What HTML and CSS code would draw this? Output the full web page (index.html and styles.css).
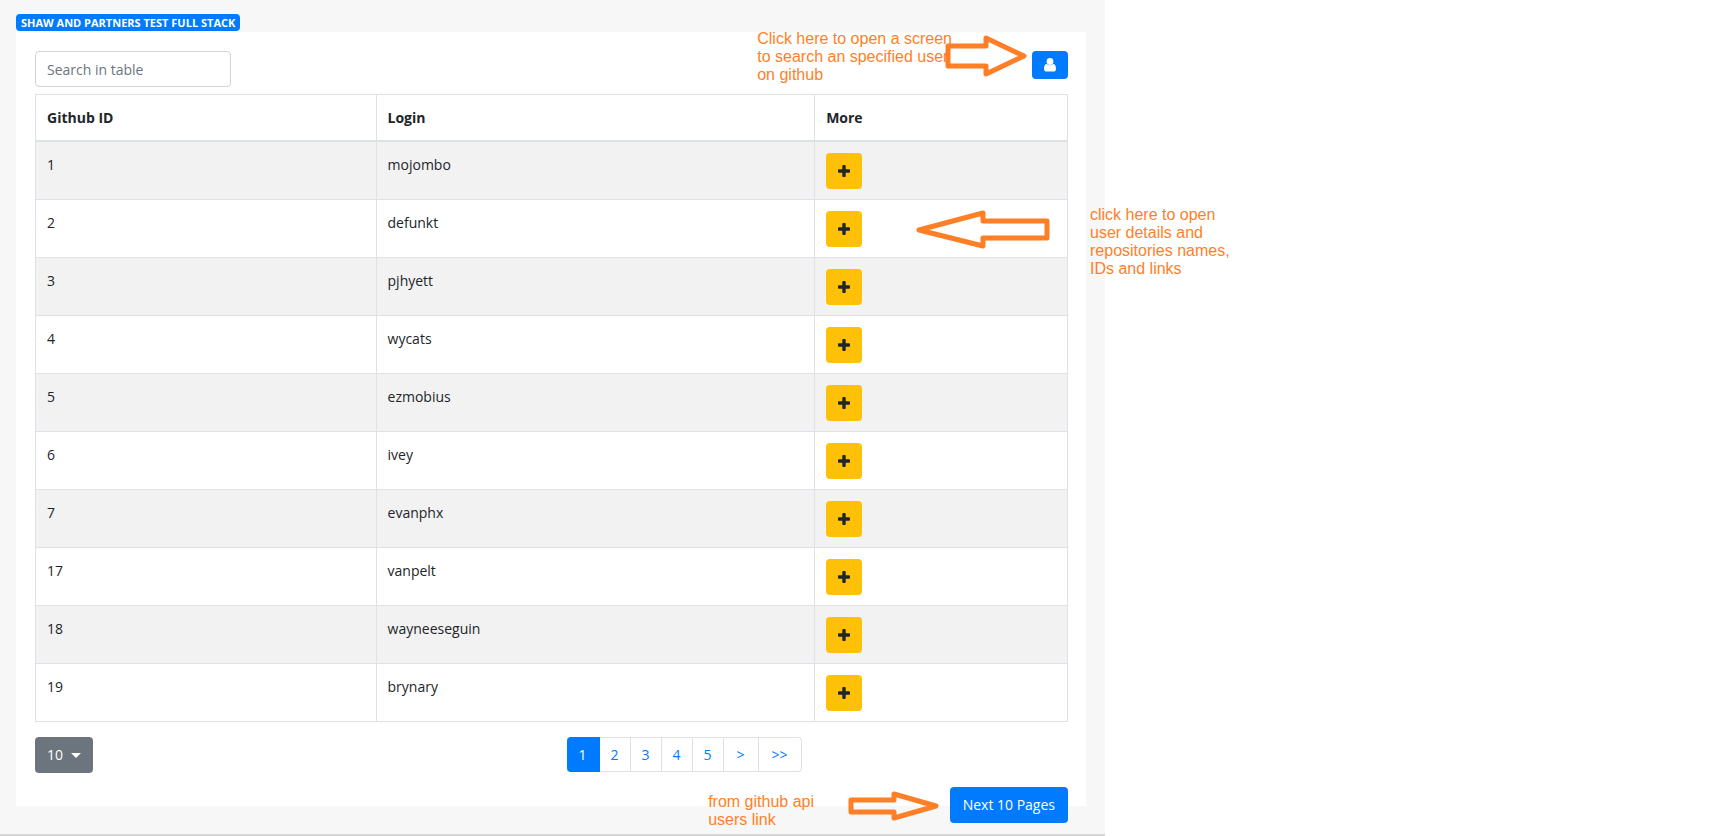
FILE: index.html
```html
<!DOCTYPE html>
<html lang="en">
<head>
<meta charset="utf-8">
<title>Shaw and Partners Test Full Stack</title>
<link rel="stylesheet" href="styles.css">
</head>
<body>
<svg class="sprite" aria-hidden="true">
  <symbol id="plus" viewBox="0 0 12 12"><path d="M5.2 0h1.6q.9 0 .9.9v3.4h3.4q.9 0 .9.9v1.600q0 .9-.9.9H7.700v3.400q0 .9-.9.9H5.200q-.9 0-.9-.9V7.700H.9q-.9 0-.9-.9V5.200q0-.9.9-.9h3.400V.9q0-.9.9-.9z"/></symbol>
  <symbol id="user" viewBox="0 0 12 14"><path d="M12 10.900c0 1.600-1 2.600-2.600 2.600H2.600C1 13.500 0 12.500 0 10.900 0 8.800.5 6 2.900 6 3.800 6.800 4.800 7.200 6 7.200S8.200 6.800 9.100 6C11.500 6 12 8.800 12 10.900z"/><circle cx="6" cy="3.500" r="3.400"/></symbol>
</svg>
<div class="page">
  <div class="shell">
    <h1 class="badge">SHAW AND PARTNERS TEST FULL STACK</h1>
    <main class="card">
      <div class="toolbar">
        <input class="search" type="text" placeholder="Search in table" aria-label="Search in table">
        <button class="btn btn-primary btn-user" type="button" aria-label="Search user"><svg class="icon-user"><use href="#user"/></svg></button>
      </div>
      <table class="users">
        <thead><tr><th class="col-id">Github ID</th><th class="col-login">Login</th><th>More</th></tr></thead>
        <tbody>
          <tr><td>1</td><td>mojombo</td><td><button class="btn btn-more" type="button" aria-label="More about mojombo"><svg class="icon-plus"><use href="#plus"/></svg></button></td></tr>
          <tr><td>2</td><td>defunkt</td><td><button class="btn btn-more" type="button" aria-label="More about defunkt"><svg class="icon-plus"><use href="#plus"/></svg></button></td></tr>
          <tr><td>3</td><td>pjhyett</td><td><button class="btn btn-more" type="button" aria-label="More about pjhyett"><svg class="icon-plus"><use href="#plus"/></svg></button></td></tr>
          <tr><td>4</td><td>wycats</td><td><button class="btn btn-more" type="button" aria-label="More about wycats"><svg class="icon-plus"><use href="#plus"/></svg></button></td></tr>
          <tr><td>5</td><td>ezmobius</td><td><button class="btn btn-more" type="button" aria-label="More about ezmobius"><svg class="icon-plus"><use href="#plus"/></svg></button></td></tr>
          <tr><td>6</td><td>ivey</td><td><button class="btn btn-more" type="button" aria-label="More about ivey"><svg class="icon-plus"><use href="#plus"/></svg></button></td></tr>
          <tr><td>7</td><td>evanphx</td><td><button class="btn btn-more" type="button" aria-label="More about evanphx"><svg class="icon-plus"><use href="#plus"/></svg></button></td></tr>
          <tr><td>17</td><td>vanpelt</td><td><button class="btn btn-more" type="button" aria-label="More about vanpelt"><svg class="icon-plus"><use href="#plus"/></svg></button></td></tr>
          <tr><td>18</td><td>wayneeseguin</td><td><button class="btn btn-more" type="button" aria-label="More about wayneeseguin"><svg class="icon-plus"><use href="#plus"/></svg></button></td></tr>
          <tr><td>19</td><td>brynary</td><td><button class="btn btn-more" type="button" aria-label="More about brynary"><svg class="icon-plus"><use href="#plus"/></svg></button></td></tr>
        </tbody>
      </table>
      <div class="table-footer">
        <div class="page-size">
          <button class="btn btn-size" type="button" aria-haspopup="true">10<span class="caret"></span></button>
        </div>
        <nav class="pagination" aria-label="Pages">
          <a class="active" href="#1" aria-current="page">1</a><a href="#2">2</a><a href="#3">3</a><a href="#4">4</a><a href="#5">5</a><a class="step" href="#next">&gt;</a><a class="step" href="#last">&gt;&gt;</a>
        </nav>
      </div>
      <div class="next-row"><button class="btn btn-primary" type="button">Next 10 Pages</button></div>
    </main>

    <p class="note note-search">Click here to open a screen<br>to search an specified user<br>on github</p>
    <svg class="arrow arrow-search" viewBox="0 0 82 42"><path d="M3 11H41V3L79 21 41 39V31H3z"/></svg>
    <svg class="arrow arrow-more" viewBox="0 0 134 40"><path d="M131 11H67V3L3 20 67 36V28H131z"/></svg>
    <p class="note note-more">click here to open<br>user details and<br>repositories names,<br>IDs and links</p>
    <p class="note note-next">from github api<br>users link</p>
    <svg class="arrow arrow-next" viewBox="0 0 92 30"><path d="M3 9H46V3L88 15 46 27V21H3z"/></svg>
  </div>
</div>
</body>
</html>
```
FILE: styles.css
```css
* { box-sizing: border-box; }

body {
  margin: 0;
  background: #fff;
  color: #212529;
  font: 14px/22px "Open Sans", "Noto Sans", sans-serif;
}

.sprite { position: absolute; width: 0; height: 0; }

.page {
  display: grid;
  grid-template-columns: 1105fr 618fr;
}

.shell {
  position: relative;
  padding: 14px 19px 28px 16px;
  background: #f7f7f7;
  border-bottom: 2px solid #d6d6d6;
}

.badge {
  width: fit-content;
  margin: 0 0 1px;
  padding: 0 5px;
  border-radius: 4px;
  background: #007bff;
  color: #fff;
  font-size: 11px;
  font-weight: 700;
  line-height: 17px;
}

.card {
  padding: 19px 18px 0 19px;
  background: #fff;
}

.toolbar {
  display: flex;
  justify-content: space-between;
  align-items: flex-start;
  margin-bottom: 7px;
}

.search {
  width: 196px;
  height: 36px;
  padding: 0 11px;
  border: 1px solid #ced4da;
  border-radius: 4px;
  background: #fff;
  color: #495057;
  font: inherit;
}
.search::placeholder { color: #6c757d; opacity: 1; }

.btn {
  display: flex;
  align-items: center;
  justify-content: center;
  height: 36px;
  padding: 0 13px;
  border: 0;
  border-radius: 4px;
  color: #fff;
  font: inherit;
}
.btn-primary { background: #007bff; }
.btn-user { width: 36px; height: 28px; padding: 0; }
.btn-more { width: 36px; padding: 0; background: #ffc107; color: #212529; }
.btn-size { gap: 8px; padding: 0 12px; background: #6c757d; }

.icon-user { width: 12px; height: 14px; fill: currentColor; }
.icon-plus { width: 12px; height: 12px; fill: currentColor; }

.caret {
  border: 5px solid transparent;
  border-top-color: currentColor;
  border-bottom: 0;
}

.users {
  width: 100%;
  table-layout: fixed;
  border-collapse: collapse;
  line-height: 24px;
}
.users th, .users td {
  padding: 11px 11px 10px;
  border: 1px solid #dee2e6;
  text-align: left;
  vertical-align: top;
}
.users th { border-bottom-width: 2px; }
.users td { height: 58px; }
.users tbody tr:nth-child(odd) { background: #f2f2f2; }
.col-id { width: 33%; }
.col-login { width: 42.5%; }

.table-footer {
  display: grid;
  grid-template-columns: 1fr 1fr;
  margin: 15px 0 14px;
}
.page-size { display: flex; }

.pagination {
  display: flex;
  align-items: flex-start;
  padding-left: 15px;
}
.pagination a {
  padding: 6px 11px;
  border: 1px solid #dee2e6;
  border-left-width: 0;
  background: #fff;
  color: #007bff;
  line-height: 21px;
  text-decoration: none;
}
.pagination .step { padding: 6px 13px; }
.pagination a:first-child { padding: 6px 12px; border-radius: 4px 0 0 4px; }
.pagination a:last-child { border-radius: 0 4px 4px 0; }
.pagination .active { border-color: #007bff; background: #007bff; color: #fff; }

.next-row {
  display: flex;
  justify-content: flex-end;
  height: 19px;
}

.note {
  position: absolute;
  margin: 0;
  color: #ff7f27;
  font: 16px/18px "Liberation Sans", Arial, sans-serif;
  white-space: nowrap;
}
.note-search { top: 30px; right: 153px; }
.note-more { top: 206px; left: calc(100% - 15px); }
.note-next { top: 793px; right: 291px; }

.arrow {
  position: absolute;
  fill: none;
  stroke: #ff7f27;
  stroke-width: 5;
  stroke-linejoin: round;
}
.arrow-search { top: 35px; right: 78px; width: 82px; height: 42px; }
.arrow-more { top: 210px; right: 55px; width: 134px; height: 40px; }
.arrow-next { top: 791px; right: 165px; width: 92px; height: 30px; }
```
